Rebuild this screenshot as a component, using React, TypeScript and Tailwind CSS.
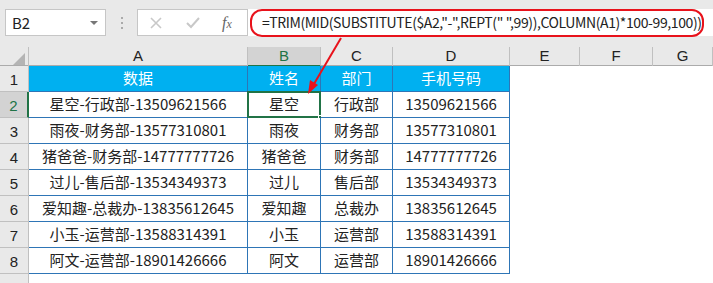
import React from 'react';

const cols = ['A', 'B', 'C', 'D', 'E', 'F', 'G'];

const rows = [
  ['星空-行政部-13509621566', '星空', '行政部', '13509621566'],
  ['雨夜-财务部-13577310801', '雨夜', '财务部', '13577310801'],
  ['猪爸爸-财务部-14777777726', '猪爸爸', '财务部', '14777777726'],
  ['过儿-售后部-13534349373', '过儿', '售后部', '13534349373'],
  ['爱知趣-总裁办-13835612645', '爱知趣', '总裁办', '13835612645'],
  ['小玉-运营部-13588314391', '小玉', '运营部', '13588314391'],
  ['阿文-运营部-18901426666', '阿文', '运营部', '18901426666'],
];

const grid = 'grid grid-cols-[29px_219px_73px_72px_117px_70px_73px_60px]';
const font = { fontFamily: '"Noto Sans CJK SC", "Noto Sans", sans-serif' };

export default function App() {
  return (
    <div className="relative w-[713px] h-[283px] overflow-hidden bg-[#e9e9e9] text-[#222]" style={font}>
      {/* formula bar */}
      <div className="flex items-center h-[47px] pl-[5px] pb-[2px]">
        <div className="w-[101px] h-[27px] bg-white border border-[#c6c6c6] flex items-center justify-between pl-[6px] pr-[7px]">
          <span className="text-[15px] leading-none">B2</span>
          <span className="w-0 h-0 border-l-[4px] border-r-[4px] border-t-[4px] border-l-transparent border-r-transparent border-t-[#777]" />
        </div>
        <div className="w-[31px] flex flex-col items-center gap-[3px]">
          <span className="w-[2px] h-[2px] bg-[#aaa]" />
          <span className="w-[2px] h-[2px] bg-[#aaa]" />
          <span className="w-[2px] h-[2px] bg-[#aaa]" />
        </div>
        <div className="w-[111px] h-[27px] bg-white border border-[#c6c6c6] flex items-center">
          <svg width="12" height="12" viewBox="0 0 12 12" className="ml-[12px]">
            <path d="M1 1L11 11M11 1L1 11" stroke="#c8c8c8" strokeWidth="1.6" />
          </svg>
          <svg width="14" height="12" viewBox="0 0 14 12" className="ml-[24px]">
            <path d="M1 6L5 10L13 1" stroke="#c8c8c8" strokeWidth="2" fill="none" />
          </svg>
          <span className="ml-[22px] text-[16px] italic text-[#666] leading-none" style={{ fontFamily: '"Liberation Serif", serif' }}>
            f<span className="text-[12px]">x</span>
          </span>
        </div>
        <div className="flex-1 h-[27px] bg-white flex items-center pl-[14px]">
          <span className="text-[14px] tracking-[-0.4px] whitespace-nowrap">
            =TRIM(MID(SUBSTITUTE($A2,"-",REPT(" ",99)),COLUMN(A1)*100-99,100))
          </span>
        </div>
      </div>

      {/* column headers */}
      <div className={`${grid} h-[19px] border-b border-[#ababab]`}>
        <div className="border-r border-[#c0c0c0] flex items-end justify-end pr-[3px] pb-[2px]">
          <span className="w-0 h-0 border-l-[12px] border-t-[12px] border-l-transparent border-t-transparent border-r-0 border-b-0 relative">
            <span className="absolute -left-[12px] -top-[12px] w-0 h-0 border-b-[12px] border-l-[12px] border-b-[#b4b4b4] border-l-transparent" />
          </span>
        </div>
        {cols.map(c => (
          <div
            key={c}
            className={
              c === 'B'
                ? 'bg-[#d3d3d3] border-r border-[#c0c0c0] border-b-2 border-b-[#217346] text-[#217346] text-[15px] leading-[18px] text-center'
                : 'border-r border-[#c0c0c0] text-[15px] leading-[18px] text-center'
            }
            style={{ fontFamily: '"Liberation Sans", sans-serif' }}
          >
            {c}
          </div>
        ))}
      </div>

      {/* body */}
      <div className={grid}>
        <div className="h-[26px] border-b border-r border-[#c0c0c0] text-[15px] flex items-center justify-center pt-[4px]" style={{ fontFamily: '"Liberation Sans", sans-serif' }}>1</div>
        {['数据', '姓名', '部门', '手机号码'].map(h => (
          <div key={h} className="h-[26px] bg-[#00b0f0] text-white text-[15px] border-r border-b border-[#2e75b6] flex items-center justify-center">{h}</div>
        ))}
        <div className="col-span-3 bg-white" />

        {rows.map((r, i) => {
          const sel = i === 0;
          return (
            <React.Fragment key={i}>
              <div
                className={
                  sel
                    ? 'h-[26px] bg-[#d3d3d3] border-b border-[#c0c0c0] border-r-2 border-r-[#217346] text-[#217346] text-[15px] flex items-center justify-center pt-[4px]'
                    : 'h-[26px] border-b border-r border-[#c0c0c0] text-[15px] flex items-center justify-center pt-[4px]'
                }
                style={{ fontFamily: '"Liberation Sans", sans-serif' }}
              >
                {i + 2}
              </div>
              {r.map((v, j) => (
                <div key={j} className="relative h-[26px] bg-white text-[15px] border-r border-b border-[#2e75b6] flex items-center justify-center">
                  {v}
                  {sel && j === 1 && (
                    <>
                      <span className="absolute -left-px -top-px -right-px -bottom-px border-2 border-[#217346]" />
                      <span className="absolute -right-[4px] -bottom-[4px] w-[6px] h-[6px] bg-[#217346] border border-white" />
                    </>
                  )}
                </div>
              ))}
              <div className="col-span-3 bg-white" />
            </React.Fragment>
          );
        })}
        <div className="h-[26px] border-r border-[#c0c0c0]" />
        <div className="col-span-7 bg-white" />
      </div>

      {/* red highlight + arrow */}
      <div className="absolute left-[250px] top-[9px] w-[454px] h-[28px] rounded-[12px] border-2 border-[#e8121b]" />
      <svg className="absolute left-0 top-0" width="713" height="283">
        <line x1="341" y1="38" x2="311" y2="89" stroke="#e8121b" strokeWidth="2" />
        <path d="M308 94L310 80L318 85Z" fill="#e8121b" />
      </svg>
    </div>
  );
}
